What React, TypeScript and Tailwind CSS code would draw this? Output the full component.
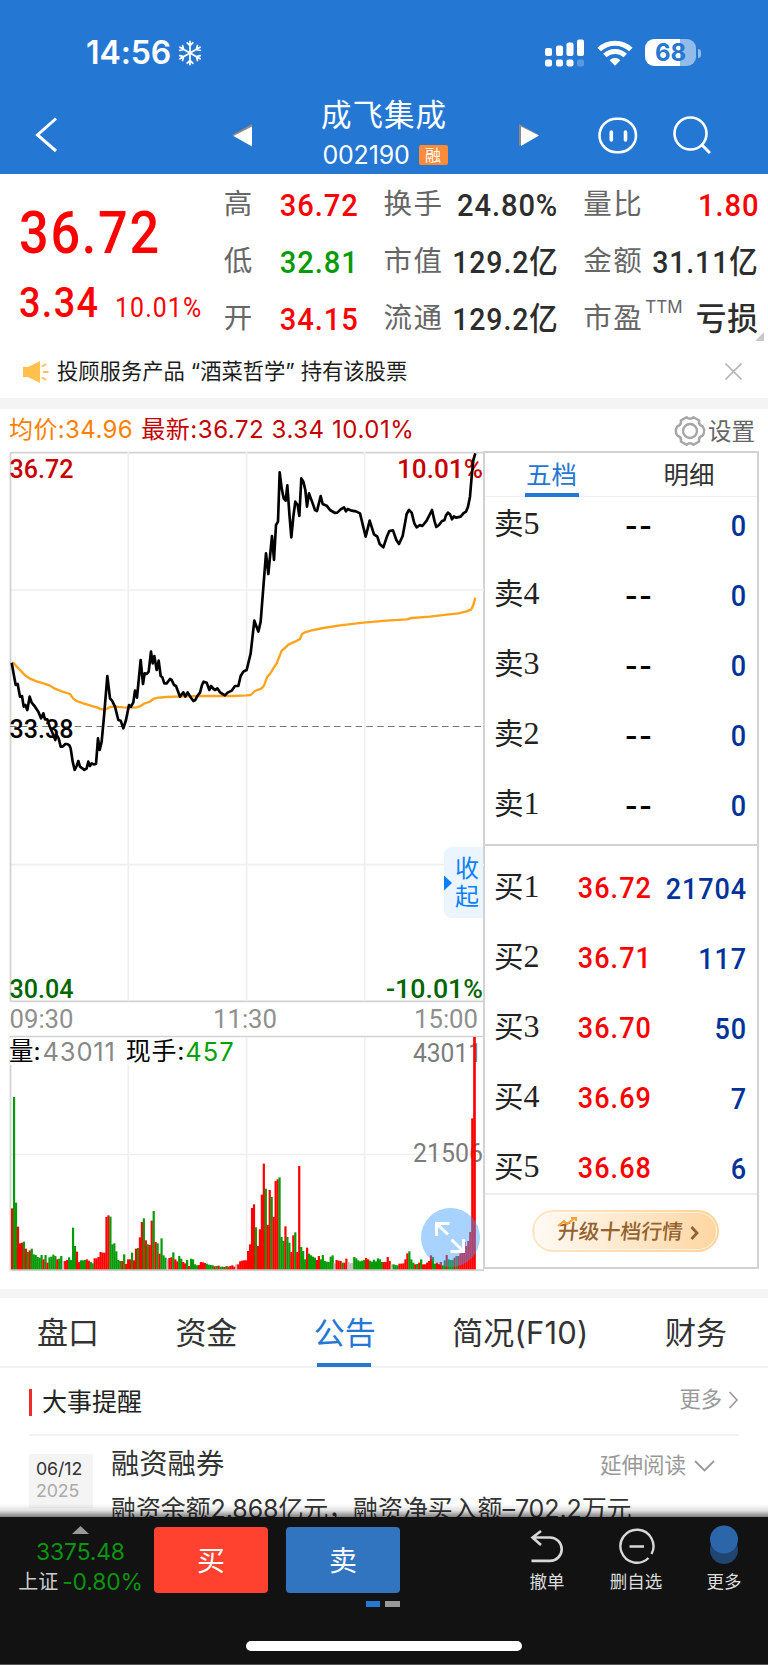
import React from "react";

const DIN = "inline-block whitespace-nowrap leading-none font-['Roboto','Noto_Sans_CJK_SC',sans-serif] font-medium";

const PRICE =
  "35,668 47,735 53,732 60,770 66,768 71,800 76,795 82,810 89,770 95,788 105,800 115,815 123,835 130,820 135,838 142,838 150,862 160,885 166,900 170,885 176,895 182,920 188,920 196,912 202,912 208,916 212,925 218,965 224,990 230,978 235,963 240,980 247,985 253,990 260,985 265,965 270,978 275,970 281,973 288,972 294,895 299,930 305,905 312,830 322,708 330,775 336,782 345,800 355,840 362,842 370,865 378,840 387,795 393,800 400,787 405,752 411,773 422,660 429,732 434,700 440,702 446,695 453,635 458,670 463,648 470,690 476,662 482,708 487,712 493,730 500,730 510,717 515,720 522,735 528,738 540,770 550,757 556,770 563,757 572,772 580,783 586,780 592,768 600,758 606,735 611,725 620,728 628,750 633,738 641,747 646,750 652,745 660,757 668,762 675,766 683,758 695,752 705,738 715,738 722,708 730,695 740,690 752,640 763,542 775,575 782,545 798,340 805,402 816,288 822,360 828,255 834,245 839,97 845,145 851,175 857,182 862,136 868,220 874,292 880,230 886,185 893,195 898,228 904,115 910,125 916,150 921,200 927,160 935,182 945,210 951,213 962,168 968,192 980,197 990,210 1005,219 1012,218 1022,208 1032,202 1038,214 1043,207 1055,212 1068,214 1080,220 1097,290 1109,242 1122,283 1132,290 1139,312 1150,322 1160,292 1168,273 1179,271 1189,300 1197,312 1208,288 1215,250 1220,222 1227,210 1235,218 1243,250 1250,262 1260,255 1267,258 1280,242 1296,210 1304,245 1309,261 1317,255 1326,243 1333,241 1338,226 1344,218 1350,223 1356,238 1362,229 1368,233 1382,230 1390,220 1398,215 1404,200 1410,170 1415,110 1420,60 1426,40";

const AVERAGE =
  "36,668 42,670 50,680 62,692 75,706 90,716 110,724 130,730 148,736 165,746 185,754 210,762 220,776 230,783 250,790 270,796 290,802 305,808 318,808 330,801 345,800 370,802 395,803 410,802 420,799 432,791 448,786 460,777 475,773 500,771 550,769 620,768 700,768 740,766 752,765 765,753 785,745 792,737 802,710 810,702 820,685 830,670 845,632 855,624 865,614 885,605 900,597 906,582 915,577 935,571 970,564 1020,556 1090,548 1160,542 1220,538 1235,534 1290,530 1340,524 1375,520 1400,514 1414,508 1420,495 1426,473";

// One entry per minute: bar height followed by r (up), g (down) or x (flat).
const VOLUME =
  "183r 517g 200g 128r 78r 80r 83g 62r 52g 57r 62g 45g 43g 37g 35g 43g 30r 43g 20r 36g 38g 44g 40g 30r 32g 40g 25x 25r 28r 36g 28g 125g 70g 53r 22r 27g 27g 28g 30r 26r 22g 18g 33r 33r 37r 52r 50r 50r 157r 162r 158g 75g 78g 54g 28g 25g 25r 45g 16r 30r 30r 50g 27r 62r 64g 96r 142r 153g 87r 75g 73r 146r 175g 82r 78g 47r 93g 42g 35g 30x 34r 36r 51g 30r 24r 40g 32g 22r 18r 28g 10r 32g 30g 15g 12g 13r 22r 21r 19r 17g 14g 13g 12g 9r 10g 11r 8g 8g 7r 10g 8r 10r 12r 8r 15x 15r 24r 26r 27r 27r 55r 75r 184r 195r 126g 70r 120r 224r 317r 242g 133r 238r 217g 157r 265r 270r 276g 97g 85g 129r 97g 80g 52r 102r 111g 52r 310r 67g 55g 30g 65r 47g 42g 38g 35g 28r 40r 30g 43g 25g 23g 22g 38g 42g 18x 28r 26r 25r 20g 20r 32r 22x 18x 20x 37g 33g 27g 24g 26g 28g 34r 30r 26g 23g 29g 24g 33g 30g 22g 22r 22r 37r 25r 15x 15g 13g 12g 17r 17r 18r 30r 48r 54g 30g 20g 15r 16g 20r 30g 15r 15r 20r 25r 42r 37g 17g 20r 16r 22r 12g 27g 43r 30g 28g 28g 35r 40g 40r 48r 55r 82r 70r 85r 112r 453r 697r"
    .split(" ")
    .map((s) => ({ h: parseInt(s, 10), c: s.slice(-1) }));
const BAR_COLOR: Record<string, string> = { r: "#fe0000", g: "#069a06", x: "#bdbdbd" };

function StatusBar() {
  return (
    <div className="flex h-[104px] items-center pl-[86px] pr-[67px] pt-[2px] text-white">
      <span className="text-[32px] font-semibold leading-none tracking-[-0.100px]">14:56</span>
      <svg className="ml-[6px] size-[26px]" viewBox="0 0 26 28" fill="none" stroke="currentColor" strokeWidth="1.9" strokeLinecap="round">
        {[0, 60, 120, 180, 240, 300].map((a) => (
          <path key={a} transform={`rotate(${a} 13 14)`} d="M13 14V1.500M13 6 10 3M13 6l3-3" />
        ))}
      </svg>
      <svg className="ml-auto h-[28px] w-[40px]" viewBox="0 0 40 28" fill="#fff">
        <rect x="1" y="9" width="7" height="8" rx="2" />
        <rect x="12" y="6.500" width="7" height="10.500" rx="2" />
        <rect x="22.500" y="3.500" width="7" height="13.500" rx="2" />
        <rect x="33" y="0.500" width="7" height="16.500" rx="2" />
        <rect x="1" y="20.500" width="7" height="7" rx="2" />
        <rect x="12" y="20.500" width="7" height="7" rx="2" />
        <rect x="22.500" y="20.500" width="7" height="7" rx="2" />
        <rect x="33" y="20.500" width="7" height="7" rx="2" opacity=".25" />
      </svg>
      <svg className="ml-[13px] h-[26px] w-[36px]" viewBox="0 0 36 26" fill="none" stroke="#fff" strokeWidth="5">
        <path d="M2.200 9.500a23 23 0 0 1 31.600 0M7.800 15.500a15 15 0 0 1 20.400 0" />
        <path d="M12.500 20.200a8 8 0 0 1 11 0L18 25.700z" fill="#fff" stroke="none" />
      </svg>
      <div className="ml-[12px] mb-px flex h-[27px] w-[51px] items-center justify-center rounded-[9px] bg-[linear-gradient(90deg,#fff_68%,#92bbe9_68%)] text-[24px] font-bold leading-none text-[#2577d4]">
        68
      </div>
      <div className="ml-[2px] h-[9px] w-[3px] rounded-r-full bg-[#92bbe9]" />
    </div>
  );
}

function NavBar() {
  return (
    <div className="flex h-[70px] items-center pb-[8px] pl-[35px] text-white">
      <svg className="h-[36px] w-[23px]" viewBox="0 0 23 36" fill="none" stroke="#fff" strokeWidth="3">
        <path d="M21 1.500 2.500 18 21 34" />
      </svg>
      <svg className="ml-[174px] h-[23px] w-[21px]" viewBox="0 0 21 23">
        <path d="M20 0 0 11 20 22z" fill="#8a8a88" />
        <path d="M20 2.500 1.500 12 20 22.500z" fill="#fff" />
      </svg>
      <div className="flex w-[262px] flex-col items-center pb-[2px]">
        <div className="text-[30.500px] leading-[36px] tracking-[1px]">成飞集成</div>
        <div className="mt-[5px] flex items-center gap-[9px] pl-[2px] pt-px">
          <span className="text-[25px] leading-[32px] tracking-[-0.200px]">002190</span>
          <span className="flex h-[20px] w-[29px] items-center justify-center rounded-[2px] bg-[#ff8a37] text-[16px] leading-none">融</span>
        </div>
      </div>
      <svg className="ml-[4px] h-[23px] w-[21px]" viewBox="0 0 21 23">
        <path d="M0 0 20 11 0 22z" fill="#8a8a88" />
        <path d="M2 2.500 20 11.500 2 22z" fill="#fff" />
      </svg>
      <svg className="ml-[58px] h-[37px] w-[40px]" viewBox="0 0 40 37" fill="none" stroke="#fff" strokeWidth="2.600">
        <rect x="1.500" y="1.700" width="36.500" height="33.500" rx="17" />
        <path d="M13.300 15v8M27.500 15v8" strokeWidth="3.600" strokeLinecap="round" />
      </svg>
      <svg className="ml-[35px] h-[38px] w-[38px]" viewBox="0 0 38 38" fill="none" stroke="#fff" strokeWidth="2.600">
        <circle cx="17.500" cy="17.500" r="16" />
        <path d="m28.500 28.500 8.500 8.500" strokeWidth="3" />
      </svg>
    </div>
  );
}

function Stat({ label, value, color = "text-[#2d2d2d]", sup }: { label: string; value: string; color?: string; sup?: string }) {
  const scale = value.endsWith("亿") ? "scale-x-[.89]" : sup ? "scale-x-[.96]" : "scale-x-[.91]";
  return (
    <div className="flex h-[57px] items-center justify-between">
      <span className="relative whitespace-nowrap text-[28.500px] leading-none tracking-[1.500px] text-[#666]">
        {label}
        {sup && <span className="absolute left-[62px] top-[-5px] text-[17px] leading-none tracking-normal">{sup}</span>}
      </span>
      <span className={`${DIN} -ml-[30px] origin-right text-[32px] tracking-[1px] ${scale} ${color}`}>{value}</span>
    </div>
  );
}

function Quote() {
  return (
    <section className="relative flex h-[171px] pr-[9px]">
      <div className="w-[224px] pl-[19px] pt-[29px]">
        <div className={`${DIN} origin-left scale-x-[.87] text-[60px] tracking-[2px] text-[#fe0000]`}>36.72</div>
        <div className="mt-[19px] flex items-baseline">
          <span className={`${DIN} w-[96px] origin-left scale-x-[.9] text-[42px] tracking-[1.500px] text-[#fe0000]`}>3.34</span>
          <span className={`${DIN} origin-left scale-x-[.92] text-[27px] !font-normal tracking-[1.200px] text-[#fe0000]`}>10.01%</span>
        </div>
      </div>
      <div className="w-[135px] pt-[2px]">
        <Stat label="高" value="36.72" color="text-[#fe0000]" />
        <Stat label="低" value="32.81" color="text-[#069a06]" />
        <Stat label="开" value="34.15" color="text-[#fe0000]" />
      </div>
      <div className="ml-[25px] w-[175px] pt-[2px]">
        <Stat label="换手" value="24.80%" />
        <Stat label="市值" value="129.2亿" />
        <Stat label="流通" value="129.2亿" />
      </div>
      <div className="ml-[25px] w-[176px] pt-[2px]">
        <Stat label="量比" value="1.80" color="text-[#fe0000]" />
        <Stat label="金额" value="31.11亿" />
        <Stat label="市盈" value="亏损" sup="TTM" />
      </div>
      <svg className="absolute bottom-[4px] right-[4px] size-[9px]" viewBox="0 0 9 9">
        <path d="M9 0v9H0z" fill="#c9c9c9" />
      </svg>
    </section>
  );
}

function Notice() {
  return (
    <section className="flex h-[53px] items-center pl-[23px] pr-[26px]">
      <svg className="h-[22px] w-[26px]" viewBox="0 0 26 22">
        <path d="M0 6h5L17 0v22L5 16H0z" fill="#ffc04c" />
        <path d="m19 5.500 4-2.500M20 11h5.500M19 16.500l4 2.500" stroke="#ffc04c" strokeWidth="2" />
      </svg>
      <span className="ml-[8px] whitespace-pre text-[21.300px] leading-none text-[#1c1c1c]">投顾服务产品 “酒菜哲学” 持有该股票</span>
      <svg className="ml-auto size-[17px]" viewBox="0 0 17 17" stroke="#b8b8b8" strokeWidth="1.600">
        <path d="m.5.5 16 16M16.500.5l-16 16" />
      </svg>
    </section>
  );
}

function ChartHead() {
  return (
    <div className="flex h-[42px] items-center pl-[9px] pr-[13px] text-[24px] leading-none">
      <span className="tracking-[0.400px] text-[#ff8000]">均价:34.96</span>
      <span className="ml-[8px] whitespace-pre tracking-[0.560px] text-[#c40000]">最新:36.72 3.34 10.01%</span>
      <svg className="ml-auto mt-px size-[32px]" viewBox="0 0 32 32" fill="none" stroke="#a6a6a6" strokeWidth="2.400">
        <path d="M12.500 2.200Q16 5.500 19.500 2.200L25.200 5.500Q24 10 28.800 11.500Q31.500 16 28.800 20.500Q24 22 25.200 26.500L19.500 29.800Q16 26.500 12.500 29.800L6.800 26.500Q8 22 3.200 20.500Q.5 16 3.200 11.500Q8 10 6.800 5.500z" strokeLinejoin="round" />
        <circle cx="16" cy="16" r="7" />
      </svg>
      <span className="ml-[2px] mt-[3px] text-[23.500px] text-[#666]">设置</span>
    </div>
  );
}

function Label({ x, y, w, fill, end, light, children }: { x: number; y: number; w: number; fill: string; end?: boolean; light?: boolean; children: string }) {
  return (
    <text
      x={x}
      y={y}
      textLength={w}
      lengthAdjust="spacingAndGlyphs"
      textAnchor={end ? "end" : "start"}
      fill={fill}
      fontSize={26}
      className={light ? "font-['Roboto',sans-serif] font-normal" : "font-['Roboto',sans-serif] font-medium"}
    >
      {children}
    </text>
  );
}

function Chart() {
  return (
    <div className="relative w-[474px]">
      <svg className="block h-[820px] w-[475px]" viewBox="9 451 475 820">
        <g stroke="#efefef" strokeWidth="1.700">
          <path d="M10 590H484M10 864.700H484M10 1154.500H484" />
        </g>
        <g fill="none" stroke="#d2d2d2" strokeWidth="1.700">
          <path d="M10.500 452.700H484M10.500 452V1001.500M10.500 1001.300H484" />
          <path d="M10.500 1036.500H484M10.500 1036V1270M10.500 1270.200H484" />
        </g>
        <path d="M128.300 452V1001M246.600 452V1001M364.700 452V1001M128.300 1037V1270M246.600 1037V1270M364.700 1037V1270" stroke="#efefef" strokeWidth="1.700" />
        <path d="M10 726.500H484" stroke="#777" strokeWidth="1.200" strokeDasharray="6.500 4.300" />
        <Label x={9.5} y={478} w={64} fill="#c80000">36.72</Label>
        <Label x={483} y={478} w={86} fill="#c80000" end>10.01%</Label>
        <Label x={9.5} y={738} w={64} fill="#000">33.38</Label>
        <Label x={9.5} y={998} w={64} fill="#006600">30.04</Label>
        <Label x={483} y={998} w={97} fill="#006600" end>-10.01%</Label>
        <Label x={9.5} y={1028} w={64} fill="#8f8f8f" light>09:30</Label>
        <Label x={213} y={1028} w={64} fill="#8f8f8f" light>11:30</Label>
        <Label x={478} y={1028} w={64} fill="#8f8f8f" end light>15:00</Label>
        <Label x={482} y={1062} w={69} fill="#7c7c7c" end light>43011</Label>
        <Label x={483} y={1162} w={70} fill="#7c7c7c" end light>21506</Label>
        <g transform="translate(0 980) scale(.33333)">
          {VOLUME.map((b, i) => (
            <rect key={i} x={33 + i * 5.9} y={868 - b.h} width={i === 235 ? 8 : 6.6} height={b.h} fill={BAR_COLOR[b.c]} />
          ))}
        </g>
        <g transform="translate(0 440) scale(.33333)" fill="none" strokeLinejoin="round">
          <polyline points={AVERAGE} stroke="#ffa21c" strokeWidth="7" />
          <polyline points={PRICE} stroke="#000" strokeWidth="8" />
        </g>
      </svg>
      <div className="absolute left-[1px] top-[587px] flex items-center bg-white text-[25.500px] leading-[27px]">
        <span className="-ml-[1px] text-[24.500px] text-black">量:</span>
        <span className="ml-[2px] tracking-[0.800px] text-[#888]">43011</span>
        <span className="ml-[10px] text-[25px] tracking-[0.800px] text-black">现手:</span>
        <span className="tracking-[1px] text-[#00a000]">457</span>
      </div>
      <div className="absolute left-[435px] top-[396px] flex h-[71px] w-[39px] items-center rounded-l-[8px] bg-[#ebf5ff]">
        <svg className="h-[22px] w-[10px]" viewBox="0 0 10 22">
          <path d="M0 3.500 8 11 0 18.500z" fill="#0a80ff" />
        </svg>
        <span className="ml-[1px] mt-px w-[25px] text-[24px] leading-[28.500px] text-[#0a80ff]">收起</span>
      </div>
      <div className="absolute left-[412px] top-[757px] size-[59px] rounded-full bg-[#3d9bff]/45">
        <svg className="size-full" viewBox="0 0 59 59" fill="none" stroke="#fff" strokeWidth="3">
          <path d="M28.500 15.500H15.500v12.500M16 16l11 10.500M30.500 31.500l11 11M29.500 43.500H42.500V31" />
        </svg>
      </div>
    </div>
  );
}

function DepthRow({ label, n, price, qty, red }: { label: string; n: number; price: string; qty: string; red?: boolean }) {
  return (
    <div className="flex h-[70px] items-center pl-[9px] pr-[10px]">
      <span className="flex w-[70px] items-baseline pb-[2px] text-[29.500px] leading-none text-[#222]">
        {label}
        <span className="font-['Liberation_Serif',serif] text-[32px] leading-none">{n}</span>
      </span>
      {red ? (
        <span className={`${DIN} w-[88px] origin-right scale-x-[.9] pt-[2px] text-right text-[30px] tracking-[1.200px] text-[#fe0000]`}>{price}</span>
      ) : (
        <span className={`${DIN} w-[90px] origin-right scale-x-[1.15] pt-[4px] text-right text-[31px] tracking-[2px] text-black`}>{price}</span>
      )}
      <span className={`${DIN} -ml-[20px] flex-1 origin-right scale-x-[.9] pt-[3px] text-right text-[30px] tracking-[1px] text-[#003399]`}>{qty}</span>
    </div>
  );
}

function Depth() {
  return (
    <aside className="h-[818px] w-[276px] border-2 border-[#d2d2d2]">
      <div className="flex h-[44px] border-b border-[#f0f0f0] text-[25.500px]">
        <div className="relative flex w-[133px] justify-center pt-[3px] leading-[38px] text-[#2577d4]">
          五档
          <span className="absolute bottom-[-1px] left-[40px] h-[4px] w-[54px] bg-[#2577d4]" />
        </div>
        <div className="flex flex-1 justify-center pl-[3px] pt-[3px] leading-[38px] text-[#333]">明细</div>
      </div>
      <div className="-mt-[8px] h-[355px]">
        {[5, 4, 3, 2, 1].map((n) => (
          <DepthRow key={n} label="卖" n={n} price="--" qty="0" />
        ))}
      </div>
      <div className="h-[351px] border-t-2 border-b-2 border-t-[#d2d2d2] border-b-[#eee] pt-[6px]">
        <DepthRow label="买" n={1} price="36.72" qty="21704" red />
        <DepthRow label="买" n={2} price="36.71" qty="117" red />
        <DepthRow label="买" n={3} price="36.70" qty="50" red />
        <DepthRow label="买" n={4} price="36.69" qty="7" red />
        <DepthRow label="买" n={5} price="36.68" qty="6" red />
      </div>
      <div className="ml-[47px] mt-[15px] flex h-[42px] w-[187px] rounded-full bg-gradient-to-r from-[#ffe6c4] to-[#ffd49a] p-[2px]">
        <div className="relative flex w-full items-center rounded-full border border-white/60 bg-gradient-to-r from-[#fffaf4] to-[#ffd6a2] pl-[23px] pt-[3px] text-[#93622f]">
          <span className="-skew-x-6 text-[20.800px] font-medium leading-none">升级十档行情</span>
          <svg className="ml-[7px] h-[14px] w-[9px]" viewBox="0 0 9 14" fill="none" stroke="#93622f" strokeWidth="2.800">
            <path d="m1.500 1 5.500 6-5.500 6" />
          </svg>
          <svg className="absolute left-[22px] top-[4px] h-[10px] w-[20px]" viewBox="0 0 20 10" fill="none" stroke="#ff9f2e" strokeWidth="2">
            <path d="m1 9 6-5 3 3 8-6M14 1h5v3" />
          </svg>
        </div>
      </div>
    </aside>
  );
}

function Tabs() {
  return (
    <nav className="relative flex h-[70px] items-center justify-between border-b-2 border-[#f2f2f2] pl-[37px] pr-[41px] text-[31px] leading-none text-[#333]">
      <span>盘口</span>
      <span>资金</span>
      <span className="relative flex h-[70px] items-center text-[#2577d4]">
        公告
        <span className="absolute bottom-0 left-[3px] h-[4px] w-[54px] bg-[#2577d4]" />
      </span>
      <span className="tracking-[0.200px]">简况(F10)</span>
      <span>财务</span>
    </nav>
  );
}

function Events() {
  return (
    <section className="h-[149px] overflow-hidden px-[29px]">
      <div className="flex h-[68px] items-center border-b-2 border-[#f3f3f3]">
        <span className="mt-[2px] h-[27px] w-[3px] bg-[#ee2b2b]" />
        <span className="ml-[10px] mt-[3px] text-[25px] leading-none text-[#222]">大事提醒</span>
        <span className="mb-[2px] ml-auto text-[21.300px] leading-none text-[#999]">更多</span>
        <svg className="mb-[2px] ml-[6px] h-[18px] w-[11px]" viewBox="0 0 11 18" fill="none" stroke="#999" strokeWidth="1.600">
          <path d="m1.500 1 7.500 8-7.500 8" />
        </svg>
      </div>
      <div className="flex">
        <div className="mt-[18px] h-[54px] w-[64px] bg-[#f4f4f4] pl-[7px] pt-[4px] text-[17.800px] leading-[21.500px] tracking-[-0.100px]">
          <div className="text-[#333]">06/12</div>
          <div className="text-[#aaa]">2025</div>
        </div>
        <div className="ml-[18px] flex-1">
          <div className="flex h-[57px] items-center">
            <span className="pb-px text-[28.300px] leading-none text-[#333]">融资融券</span>
            <span className="ml-auto pt-[2px] text-[21.500px] leading-none text-[#999]">延伸阅读</span>
            <svg className="ml-[8px] mr-[24px] mt-[3px] h-[12px] w-[21px]" viewBox="0 0 21 12" fill="none" stroke="#999" strokeWidth="1.800">
              <path d="m1 1 9.500 9.500L20 1" />
            </svg>
          </div>
          <div className="whitespace-nowrap pt-px text-[25px] leading-[30px] tracking-[-0.100px] text-[#333]">
            融资余额2.868亿元，融资净买入额–702.2万元
          </div>
        </div>
      </div>
    </section>
  );
}

function BottomBar() {
  return (
    <footer className="relative h-[148px] border-b border-[#555] bg-[#121212]">
      <div className="absolute inset-x-0 top-[-13px] h-[13px] bg-[linear-gradient(180deg,transparent,rgba(0,0,0,.12)_50%,rgba(0,0,0,.5))]" />
      <div className="flex pt-[10px]">
        <div className="flex w-[154px] flex-col items-center pl-[7px]">
          <svg className="-mt-[1px] h-[8px] w-[17px]" viewBox="0 0 17 8">
            <path d="M8.500 0 17 8H0z" fill="#999" />
          </svg>
          <div className="mt-[6px] text-[22.800px] leading-[24px] tracking-[-0.100px] text-[#0a960a]">3375.48</div>
          <div className="mt-[6px] flex items-center text-[20px] leading-[24px]">
            <span className="text-[#ccc]">上证</span>
            <span className="ml-[4px] text-[22.800px] tracking-[-0.100px] text-[#0a960a]">-0.80%</span>
          </div>
        </div>
        <button className="flex h-[66px] w-[114px] items-center justify-center rounded-[4px] bg-[#ff4230] pt-[2px] text-[28px] leading-none text-white">买</button>
        <div className="ml-[18px]">
          <button className="flex h-[66px] w-[114px] items-center justify-center rounded-[4px] bg-[#3174c0] pt-[2px] text-[28px] leading-none text-white">卖</button>
          <div className="mt-[8px] flex justify-end gap-[5px]">
            <span className="h-[6px] w-[14px] bg-[#2577d4]" />
            <span className="h-[6px] w-[15px] bg-[#999]" />
          </div>
        </div>
        <div className="ml-[103px] flex flex-1 text-[17.500px] leading-none text-[#ddd]">
          <div className="flex w-[88px] flex-col items-center">
            <svg className="mt-[2px] h-[36px] w-[34px]" viewBox="0 0 34 36" fill="none" stroke="#d8d8d8" strokeWidth="2.600">
              <path d="M11 2 2.500 8.500 11 16M3 8.500h17a11.600 11.600 0 0 1 0 23.400H1.500" />
            </svg>
            <span className="mt-[8px]">撤单</span>
          </div>
          <div className="flex w-[90px] flex-col items-center">
            <svg className="mt-[1px] size-[37px]" viewBox="0 0 37 37" fill="none" stroke="#d8d8d8" strokeWidth="2.400">
              <path d="M33.500 26A16.500 16.500 0 1 0 30.500 30M11.500 18.500h14.500" />
            </svg>
            <span className="mt-[8px]">删自选</span>
          </div>
          <div className="flex w-[86px] flex-col items-center">
            <svg className="-mt-[2px] h-[40px] w-[28px]" viewBox="0 0 28 40">
              <circle cx="14" cy="25" r="14" fill="#1f4570" />
              <circle cx="14" cy="14.500" r="14" fill="#2b66ab" />
            </svg>
            <span className="mt-[8px]">更多</span>
          </div>
        </div>
      </div>
      <div className="absolute bottom-[13px] left-[246px] h-[10px] w-[276px] rounded-full bg-white" />
    </footer>
  );
}

export default function App() {
  return (
    <div className="h-[1665px] w-[768px] overflow-hidden bg-white font-['Inter','Noto_Sans_CJK_SC',sans-serif]">
      <header className="h-[174px] bg-[#2577d4]">
        <StatusBar />
        <NavBar />
      </header>
      <Quote />
      <Notice />
      <div className="h-[11px] bg-[#f4f4f4]" />
      <ChartHead />
      <main className="flex h-[838px] pl-[9px]">
        <Chart />
        <Depth />
      </main>
      <div className="h-[9px] bg-[#f5f5f5]" />
      <Tabs />
      <Events />
      <BottomBar />
    </div>
  );
}
